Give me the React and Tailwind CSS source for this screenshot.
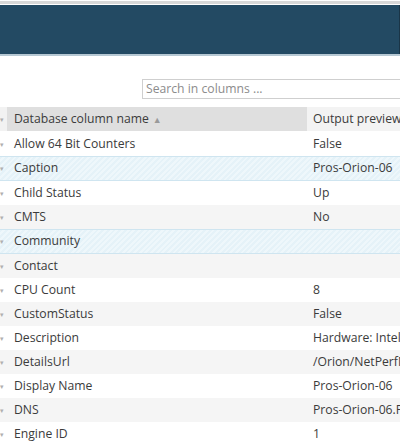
import React from 'react';

const rows = [
  { name: 'Allow 64 Bit Counters', preview: 'False' },
  { name: 'Caption', preview: 'Pros-Orion-06', selected: true },
  { name: 'Child Status', preview: 'Up' },
  { name: 'CMTS', preview: 'No' },
  { name: 'Community', preview: '', selected: true },
  { name: 'Contact', preview: '' },
  { name: 'CPU Count', preview: '8' },
  { name: 'CustomStatus', preview: 'False' },
  { name: 'Description', preview: 'Hardware: Intel64 Family 6 Model' },
  { name: 'DetailsUrl', preview: '/Orion/NetPerfMon/NodeDetails.aspx' },
  { name: 'Display Name', preview: 'Pros-Orion-06' },
  { name: 'DNS', preview: 'Pros-Orion-06.Prosoft.local' },
  { name: 'Engine ID', preview: '1' },
];

const Caret = () => <span className="text-[7px] leading-none text-[#b0b0b0]">▾</span>;

const App = () => {
  return (
    <div className="w-[400px] h-[443px] overflow-hidden bg-white text-[12.2px] text-[#3b3b3b] font-['Open_Sans','Liberation_Sans',sans-serif]">
      {/* top bar */}
      <div className="pt-px">
        <div className="h-[3px] bg-[#d8d8d8]" />
        <div className="h-px bg-white" />
        <div className="h-[49px] bg-[#234a63] border-r border-[#1a3547]" />
        <div className="h-[2px] bg-[#b6c8d3]" />
      </div>

      {/* search */}
      <div className="pl-[142px] pt-[23px]">
        <div className="w-[300px] h-[20px] border border-[#cfcfcf] flex items-center px-[3px] text-[#8c8c8c] leading-none">
          Search in columns ...
        </div>
      </div>

      {/* table */}
      <div className="mt-[8px] w-[560px]">
        <div className="flex h-[24px] mb-px items-center">
          <div className="w-[7px] h-full bg-[#f2f2f2] flex items-center"><Caret /></div>
          <div className="w-[300px] h-full bg-[#dfdfdf] flex items-center pl-[7px] gap-[4px]">
            Database column name
            <span className="text-[9px] text-[#9a9a9a] leading-none">▲</span>
          </div>
          <div className="flex-1 h-full bg-[#f3f3f3] flex items-center pl-[6px]">Output preview</div>
        </div>

        {rows.map((row, i) => {
          let cls = i % 2 === 1 ? 'h-[24px] bg-[#f5f5f5]' : 'h-[24px] bg-white';
          if (row.selected) {
            cls = 'h-[25px] bg-[repeating-linear-gradient(135deg,#e5f2f8_0px,#e5f2f8_2px,#eef7fb_2px,#eef7fb_4px)] border-y border-[#cfe5f0]';
          }
          return (
            <div key={row.name} className={`flex items-center ${cls}`}>
              <div className="w-[7px] flex items-center"><Caret /></div>
              <div className="w-[300px] pl-[7px] whitespace-nowrap">{row.name}</div>
              <div className="flex-1 pl-[6px] whitespace-nowrap">{row.preview}</div>
            </div>
          );
        })}
      </div>
    </div>
  );
};

export default App;
